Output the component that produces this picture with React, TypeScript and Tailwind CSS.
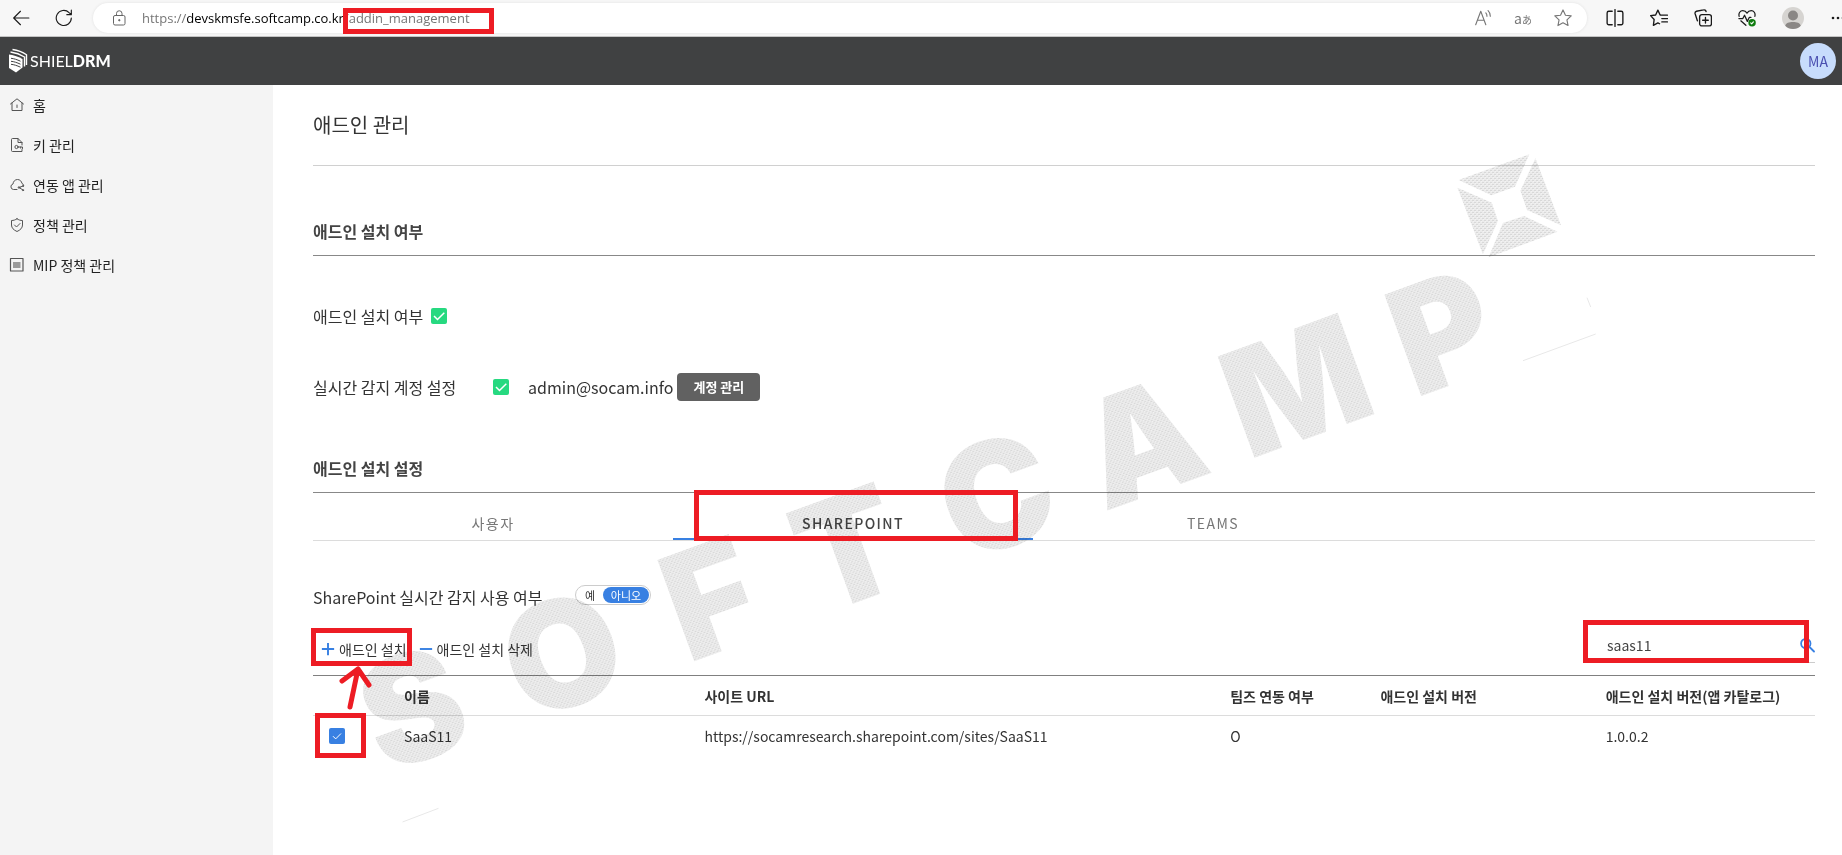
import { useState } from 'react'
import type { ReactNode } from 'react'

const NAV = [
  { label: '홈', icon: 'home' },
  { label: '키 관리', icon: 'key' },
  { label: '연동 앱 관리', icon: 'cloud' },
  { label: '정책 관리', icon: 'shield' },
  { label: 'MIP 정책 관리', icon: 'mip' },
]

const TABS = ['사용자', 'SHAREPOINT', 'TEAMS']

const SITES = [
  { name: 'SaaS11', url: 'https://socamresearch.sharepoint.com/sites/SaaS11', teams: 'O', version: '', catalog: '1.0.0.2' },
]

const WATERMARK = [
  { char: 'S', x: 412, y: 707 },
  { char: 'O', x: 562, y: 653 },
  { char: 'F', x: 710, y: 598 },
  { char: 'T', x: 848, y: 548 },
  { char: 'C', x: 996, y: 494 },
  { char: 'A', x: 1141, y: 441 },
  { char: 'M', x: 1296, y: 385 },
  { char: 'P', x: 1442, y: 331 },
]

function Icon({ size = 16, children }: { size?: number; children: ReactNode }) {
  return (
    <svg
      width={size}
      height={size}
      viewBox="0 0 16 16"
      fill="none"
      stroke="currentColor"
      strokeLinecap="round"
      strokeLinejoin="round"
      aria-hidden="true"
      className="flex-shrink-0"
    >
      {children}
    </svg>
  )
}

function NavIcon({ name }: { name: string }) {
  if (name === 'home') {
    return (
      <Icon>
        <path d="M1.5 7 8 1.8 14.5 7M3 6v7.5h10V6M8 8v2.5" />
      </Icon>
    )
  }
  if (name === 'key') {
    return (
      <Icon>
        <path d="M4.500 14.500h-1a1 1 0 0 1-1-1v-11a1 1 0 0 1 1-1H9l4 4V8M9 1.500v4h4M4.500 14.500H13v-2" />
        <circle cx="7.500" cy="10" r="1.600" />
        <path d="M9.200 10H13.500v1.500M11.700 10v1.200" />
      </Icon>
    )
  }
  if (name === 'cloud') {
    return (
      <Icon>
        <path d="M8 12.500H4.500a2.800 2.800 0 0 1-.5-5.500C4.200 4.500 6 2.500 8.500 2.500S12.500 4.300 13 6.500c1 .3 1.500 1 1.700 1.800" />
        <path d="m10 10.500 4-1.500m-4 1.500 4 2.500" />
        <circle cx="10" cy="10.500" r=".8" />
        <circle cx="14" cy="9" r=".5" />
        <circle cx="14" cy="13.200" r=".6" />
      </Icon>
    )
  }
  if (name === 'shield') {
    return (
      <Icon>
        <path d="M8 1.800C6.300 3 4.500 3.500 2.500 3.500V8c0 3 2.200 5 5.500 6.500 3.300-1.500 5.500-3.500 5.500-6.500V3.500c-2 0-3.800-.5-5.500-1.700Z" />
        <path d="m5.500 8 2 2L11 6.500" />
      </Icon>
    )
  }
  return (
    <Icon>
      <rect x="1.500" y="1.500" width="12.500" height="12.500" strokeWidth="1.200" />
      <rect x="4" y="5" width="7.500" height="6" fill="#9a9a9a" stroke="none" />
    </Icon>
  )
}

// Red outline drawn over the control it is placed in
function Mark({ className }: { className: string }) {
  return <span aria-hidden="true" className={`pointer-events-none absolute z-20 border-[5px] border-[#ed1c24] ${className}`} />
}

function BarButton({ label, children }: { label: string; children: ReactNode }) {
  return (
    <button type="button" aria-label={label} className="w-11 flex-shrink-0 flex items-center justify-center">
      {children}
    </button>
  )
}

function BrowserBar() {
  return (
    <div className="h-[37px] flex items-center bg-[#f7f7f7] border-b border-[#c4c4c4] text-[#1a1a1a] overflow-hidden">
      <button type="button" aria-label="Back" className="w-[42px] flex-shrink-0 flex items-center justify-center">
        <Icon size={18}>
          <path d="M15 8H1.500M7.500 2 1.500 8l6 6" />
        </Icon>
      </button>
      <BarButton label="Refresh">
        <Icon size={18}>
          <path d="M14.500 8a6.700 6.700 0 1 1-2-4.800L14.500 5M14.500 1v4h-4" />
        </Icon>
      </BarButton>
      <div className="h-[30px] ml-[7px] mr-1.5 pl-5 pr-1 flex-1 min-w-0 flex items-center rounded-full bg-white shadow-[0_0_3px_#e0e0e0]">
        <svg width="13" height="16" viewBox="0 0 13 16" fill="none" stroke="#666" aria-hidden="true" className="flex-shrink-0">
          <rect x=".5" y="5.500" width="11.500" height="9.500" rx="1.500" />
          <path d="M3.500 5.500V3.500a2.700 2.700 0 0 1 5.500 0v2" />
          <circle cx="6.300" cy="10.200" r=".7" fill="#666" />
        </svg>
        <div className="relative ml-4 flex-1 font-['Open_Sans',sans-serif] text-[13px] leading-5 text-[#767676] whitespace-nowrap">
          https://<span className="text-black">devskmsfe.softcamp.co.kr</span>/addin_management
          <Mark className="left-[201px] top-0 w-[151px] h-[26px]" />
        </div>
        <button type="button" aria-label="Read aloud" className="w-10 flex items-center justify-center text-[#767676]">
          <Icon size={18}>
            <path d="m1.500 14 4.500-12 4.500 12M3 10h6M10.500 3.500a4 4 0 0 1 1 3M12.500 1.500a6.500 6.500 0 0 1 2 5" />
          </Icon>
        </button>
        <button type="button" aria-label="Translate" className="w-10 font-['Noto_Sans_CJK_JP',sans-serif] text-[#767676] leading-5">
          <span className="text-sm">a</span>
          <span className="text-[10px]">あ</span>
        </button>
        <button type="button" aria-label="Favorite" className="w-10 flex items-center justify-center text-[#767676]">
          <Icon size={18}>
            <path d="m8 .8 2.200 4.700 5.100.6-3.800 3.500 1 5.100L8 12.200l-4.500 2.500 1-5.100L.700 6.100l5.100-.6Z" />
          </Icon>
        </button>
      </div>
      <BarButton label="Split screen">
        <Icon size={18}>
          <path d="M5.500 2H2.500A1.500 1.500 0 0 0 1 3.500v9A1.500 1.500 0 0 0 2.500 14h3M10.500 2h3A1.500 1.500 0 0 1 15 3.500v9a1.500 1.500 0 0 1-1.500 1.500h-3M8 .5v15" strokeWidth="1.200" />
        </Icon>
      </BarButton>
      <BarButton label="Favorites">
        <Icon size={18}>
          <path d="M9.500 5.500h6M10.500 8.500h5M10.500 11.500h5M9 5.300 7 1 5 5.300l-4.500.6L3.700 9.300 3 14.500l4-2.200 1.500.8" strokeWidth="1.200" />
        </Icon>
      </BarButton>
      <BarButton label="Collections">
        <Icon size={18}>
          <rect x="5" y="5" width="10.500" height="10" rx="2" strokeWidth="1.200" />
          <path d="M10.200 7.500v5M7.700 10h5M3 10.500 1 4.200A1.800 1.800 0 0 1 2.200 2L8.500.800a1.800 1.800 0 0 1 2.200 1.400" strokeWidth="1.200" />
        </Icon>
      </BarButton>
      <BarButton label="Browser essentials">
        <Icon size={18}>
          <path d="M1 6.500C.300 3.500 2 1.500 4.200 1.500 6 1.500 7.300 2.500 8 3.700c.7-1.200 2-2.200 3.800-2.200 2.200 0 3.900 2 3.200 5M.8 8.500h3.500l1.500-3 2.500 5.500 1.700-3.500h1.500M2.500 10.500 7 14.500" strokeWidth="1.100" />
          <circle cx="12.500" cy="12.200" r="3.300" fill="#107c10" stroke="none" />
          <path d="m11.300 12.300.9.900 1.500-1.700" stroke="#fff" />
        </Icon>
      </BarButton>
      <button type="button" aria-label="Profile" className="w-12 flex-shrink-0 flex items-center justify-center">
        <svg width="22" height="22" viewBox="0 0 22 22" aria-hidden="true">
          <circle cx="11" cy="11" r="11" fill="#d6d4d1" />
          <circle cx="11" cy="8.500" r="5" fill="#8a8785" />
          <path d="M3.200 18.700C4 15.800 7 15 11 15s7 .8 7.800 3.700A11 11 0 0 1 11 22a11 11 0 0 1-7.800-3.300Z" fill="#8a8785" />
        </svg>
      </button>
      <button type="button" aria-label="Settings" className="w-[25px] flex-shrink-0 overflow-hidden pl-[14px]">
        <svg width="16" height="4" viewBox="0 0 16 4" fill="#1a1a1a" aria-hidden="true" className="max-w-none">
          <circle cx="2" cy="2" r="1.300" />
          <circle cx="7" cy="2" r="1.300" />
          <circle cx="12" cy="2" r="1.300" />
        </svg>
      </button>
    </div>
  )
}

function AppHeader() {
  return (
    <header className="h-12 pl-2 pr-1.5 flex items-center justify-between bg-[#404142]">
      <a href="#home" className="flex items-center gap-0.5 text-white font-['Lato',sans-serif] text-base">
        <svg width="20" height="26" viewBox="0 0 20 26" aria-hidden="true">
          <path d="M1 6.500c4 .5 9 2 13.500 4.500v8.500L8 24.500 1 20Z" fill="#fff" />
          <path d="M3 10.300c3 .3 6 1.300 9.500 2.900M3 13.300c3 .3 6 1.300 9.500 2.900M3 16.300c3 .3 6 1.300 9.500 2.900" stroke="#404142" fill="none" />
          <path d="M2.500 4c5 .7 10 2.500 14 5v9.500M4.500 1.500c5 .7 10 2.500 14 5.300V17" stroke="#fff" strokeWidth="1.400" fill="none" />
        </svg>
        <span>SHIEL<b className="font-black">DRM</b></span>
      </a>
      <button type="button" className="w-9 h-9 rounded-full bg-[#c7dcfc] text-[#4a4fb0] text-sm">MA</button>
    </header>
  )
}

function Sidebar() {
  return (
    <nav className="w-[273px] flex-shrink-0 bg-[#f4f4f4]">
      {NAV.map(item => (
        <a key={item.label} href={`#${item.icon}`} className="h-10 pl-[9px] flex items-center gap-2 text-sm text-[#222]">
          <span className="text-[#555]"><NavIcon name={item.icon} /></span>
          {item.label}
        </a>
      ))}
    </nav>
  )
}

function GreenCheck({ label }: { label: string }) {
  return (
    <span className="relative w-4 h-4 flex-shrink-0">
      <input type="checkbox" defaultChecked aria-label={label} className="block appearance-none w-4 h-4 rounded-[2px] bg-[#26d980]" />
      <svg width="16" height="16" viewBox="0 0 16 16" fill="none" stroke="#fff" strokeWidth="1.500" aria-hidden="true" className="pointer-events-none absolute inset-0">
        <path d="m3 8 3.500 3.500L13.300 4.800" />
      </svg>
    </span>
  )
}

function SectionTitle({ children }: { children: ReactNode }) {
  return <h2 className="h-12 pb-0.5 flex items-center border-b border-[#888] text-base font-bold text-[#444]">{children}</h2>
}

function SiteTable() {
  return (
    <table className="relative w-full table-fixed border-t border-[#808080] text-sm text-left text-[#333]">
      <thead>
        <tr className="h-10 border-b border-[#dcdcdc]">
          <td className="w-[5%]" />
          <th scope="col" className="w-[20%] px-4 font-bold">이름</th>
          <th scope="col" className="w-[35%] px-4 font-bold">사이트 URL</th>
          <th scope="col" className="w-[10%] px-4 font-bold whitespace-nowrap">팀즈 연동 여부</th>
          <th scope="col" className="w-[15%] px-4 font-bold">애드인 설치 버전</th>
          <th scope="col" className="w-[15%] px-4 font-bold whitespace-nowrap">애드인 설치 버전(앱 카탈로그)</th>
        </tr>
      </thead>
      <tbody>
        {SITES.map(site => (
          <tr key={site.name} className="h-10">
            <td className="pl-4">
              <span className="relative block w-4 h-4">
                <input type="checkbox" defaultChecked aria-label={site.name} className="block appearance-none w-4 h-4 rounded-[2px] bg-[#3880e2]" />
                <svg width="16" height="16" viewBox="0 0 16 16" fill="none" stroke="#fff" aria-hidden="true" className="pointer-events-none absolute inset-0">
                  <path d="m4 8.200 2.700 2.700L12 5.500" />
                </svg>
                <Mark className="-left-3.5 -top-[15px] w-[51px] h-[45px]" />
                <svg width="40" height="50" viewBox="0 0 40 50" fill="none" stroke="#ed1c24" strokeWidth="5" strokeLinecap="round" strokeLinejoin="round" aria-hidden="true" className="pointer-events-none absolute z-20 left-2 -top-16">
                  <path d="M13 43 21 5M5 17 21 5l11 16" />
                </svg>
              </span>
            </td>
            <td className="px-4">{site.name}</td>
            <td className="px-4 whitespace-nowrap">{site.url}</td>
            <td className="px-4">{site.teams}</td>
            <td className="px-4">{site.version}</td>
            <td className="px-4">{site.catalog}</td>
          </tr>
        ))}
      </tbody>
    </table>
  )
}

function Watermark() {
  return (
    <svg width="1600" height="855" viewBox="0 0 1600 855" aria-hidden="true" className="pointer-events-none absolute z-10 left-0 top-0 mix-blend-multiply">
      <defs>
        <pattern id="dots" width="4" height="4" patternUnits="userSpaceOnUse">
          <rect width="4" height="4" fill="#ebebeb" />
          <path d="M0 0h2v1H0zM2 2h2v1H2z" fill="#d8d8d8" />
          <path d="M1 1h1v1H1zM3 3h1v1H3z" fill="#f3f3f3" />
        </pattern>
      </defs>
      {WATERMARK.map(({ char, x, y }) => (
        <g key={x} transform={`translate(${x} ${y}) rotate(-20)`}>
          <text y="54" textAnchor="middle" fill="url(#dots)" className="font-['Inter',sans-serif] font-black text-[148px]">{char}</text>
        </g>
      ))}
      <g fill="url(#dots)">
        <path d="M1458.600 180 1529.300 154.300 1515 186.700 1491.400 195.300Z" />
        <path d="M1535.400 158.300 1561 225.300 1527 210 1520.400 190.700Z" />
        <path d="M1557.500 231.700 1488.600 257.300 1502.900 223 1524 216Z" />
        <path d="M1457.500 187.700 1491.800 202.700 1497.900 221 1482.900 254.300Z" />
      </g>
      <path d="m1523 360.700 72.700-26.700M1587 297.700l3.700 9.300M402.500 822l36-13.700" stroke="#e8e8e8" fill="none" />
    </svg>
  )
}

export default function App() {
  const [tab, setTab] = useState('SHAREPOINT')
  const [enabled, setEnabled] = useState('no')
  const [search, setSearch] = useState('saas11')

  return (
    <div className="relative min-h-screen flex flex-col overflow-hidden bg-white font-['Noto_Sans_CJK_KR',sans-serif]">
      <BrowserBar />
      <AppHeader />
      <div className="flex-1 flex">
        <Sidebar />
        <main className="flex-1 min-w-0 pl-10 pr-[27px] text-[#333]">
          <h1 className="h-[81px] flex items-center border-b border-[#d0d0d0] text-xl">애드인 관리</h1>
          <div className="h-[42px]" />
          <SectionTitle>애드인 설치 여부</SectionTitle>

          <div className="mt-12 h-6 flex items-center gap-2">
            <span>애드인 설치 여부</span>
            <GreenCheck label="애드인 설치 여부" />
          </div>
          <div className="mt-[43px] h-8 flex items-center">
            <span className="w-[180px]">실시간 감지 계정 설정</span>
            <GreenCheck label="실시간 감지 계정 설정" />
            <span className="ml-[19px] mr-1">admin@socam.info</span>
            <button type="button" className="w-[83px] h-7 rounded bg-[#616161] text-[13px] font-bold text-white">계정 관리</button>
          </div>

          <div className="h-[42px]" />
          <SectionTitle>애드인 설치 설정</SectionTitle>

          <div role="tablist" className="h-12 flex border-b border-[#dcdcdc]">
            {TABS.map(name => (
              <button
                key={name}
                type="button"
                role="tab"
                aria-selected={tab === name}
                onClick={() => setTab(name)}
                className={`relative w-[360px] pt-3.5 text-sm tracking-widest border-b-2 ${tab === name ? 'border-[#3880e2] text-[#444] font-medium' : 'border-transparent text-[#777]'}`}
              >
                {name}
                {name === 'SHAREPOINT' && <Mark className="left-[21px] -top-[3px] w-[324px] h-[51px]" />}
              </button>
            ))}
          </div>

          <div className="mt-[42px] h-7 flex items-center">
            <span className="w-[262px]">SharePoint 실시간 감지 사용 여부</span>
            <div role="group" aria-label="SharePoint 실시간 감지 사용 여부" className="w-[76px] h-5 mb-1 p-px flex rounded-full border border-[#ccc] text-[11px] leading-4">
              <button type="button" onClick={() => setEnabled('yes')} className={enabled === 'yes' ? 'flex-1 rounded-full bg-[#3880e2] text-white' : 'flex-1'}>예</button>
              <button type="button" onClick={() => setEnabled('no')} className={enabled === 'no' ? 'w-[46px] rounded-full bg-[#3880e2] text-white' : 'w-[46px]'}>아니오</button>
            </div>
          </div>

          <div className="mt-3 h-[52px] flex items-start justify-between">
            <div className="flex gap-3 pt-4 text-sm">
              <button type="button" className="relative pl-2 flex items-center gap-1">
                <span className="text-[#3880e2]">
                  <Icon size={14}><path d="M1 8h14M8 1v14" strokeWidth="2.200" strokeLinecap="butt" /></Icon>
                </span>
                애드인 설치
                <Mark className="-left-0.5 -top-[11px] w-[101px] h-[38px]" />
              </button>
              <button type="button" className="flex items-center gap-1">
                <span className="text-[#3880e2]">
                  <Icon size={14}><path d="M1 8h14" strokeWidth="2.200" strokeLinecap="butt" /></Icon>
                </span>
                애드인 설치 삭제
              </button>
            </div>
            <label className="relative w-[212px] h-10 pt-1 flex items-center border-b border-[#ccc]">
              <input
                type="text"
                aria-label="검색"
                value={search}
                onChange={e => setSearch(e.target.value)}
                className="min-w-0 flex-1 pl-1 text-sm text-[#444] outline-none"
              />
              <span className="text-[#3880e2]">
                <Icon><path d="m10.500 10 4.500 4.500M11.500 6.500a4.700 4.700 0 1 1-9.400 0 4.700 4.700 0 0 1 9.400 0Z" strokeWidth="1.800" /></Icon>
              </span>
              <Mark className="-left-5 -top-[3px] w-[226px] h-[43px]" />
            </label>
          </div>

          <SiteTable />
        </main>
      </div>
      <Watermark />
    </div>
  )
}
